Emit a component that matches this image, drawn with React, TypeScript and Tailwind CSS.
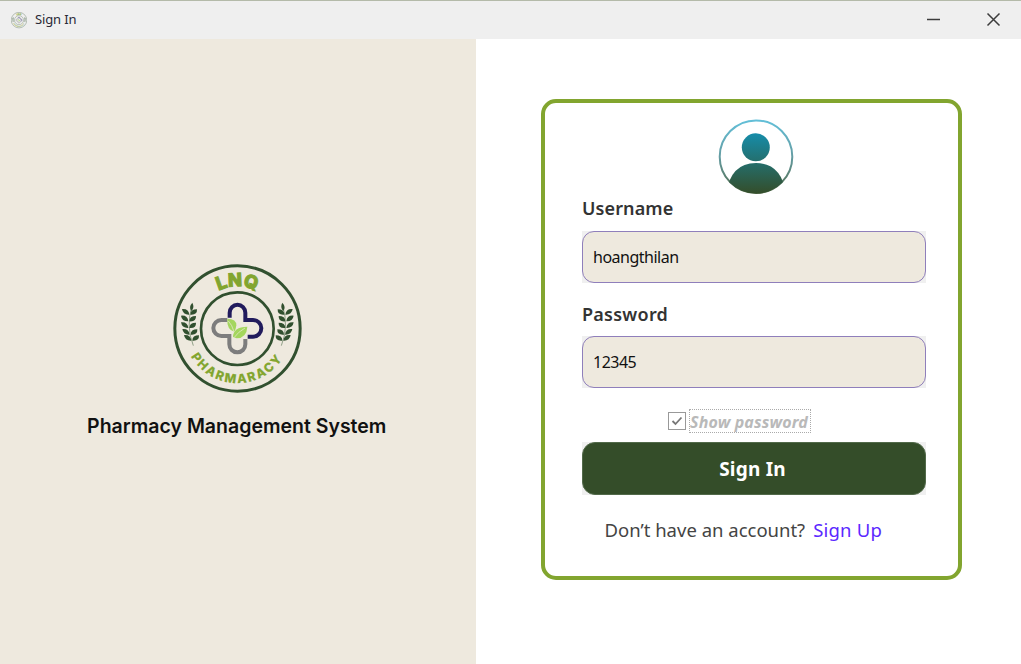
import React from "react";

function Leaves({ flip = false }: { flip?: boolean }) {
  const rows = [176, 196, 216, 236, 254];
  return (
    <g transform={flip ? "translate(434 0) scale(-1 1)" : undefined} fill="#31502f">
      <path d="M81 152Q62 215 85 272" fill="none" stroke="#5f7a5a" strokeWidth="2" />
      <path d="M82 143Q90 158 79 168Q70 156 82 143Z" />
      {rows.map((y, i) => {
        const x = [73, 70, 70, 74, 79][i];
        return (
          <g key={y} transform={`translate(${x} ${y})`}>
            <path d="M0 3Q-19 4 -22 -14Q-2 -16 0 3Z" />
            <path d="M3 3Q3 -13 23 -13Q24 5 3 3Z" />
          </g>
        );
      })}
    </g>
  );
}

function Logo({ className }: { className: string }) {
  return (
    <svg className={className} viewBox="0 0 435 435">
      <defs>
        <path id="top-arc" d="M92 219A125 125 0 0 1 342 219" />
        <path id="bottom-arc" d="M75 299A161 161 0 0 0 359 299" />
      </defs>
      <circle cx="217.500" cy="220.500" r="188" fill="none" stroke="#31502f" strokeWidth="9" />
      <circle cx="217" cy="221" r="109" fill="none" stroke="#31502f" strokeWidth="8" />
      <text fill="#82a52f" stroke="#82a52f" strokeWidth="3" fontFamily="Inter, sans-serif" fontWeight="800" fontSize="55" textAnchor="middle">
        <textPath href="#top-arc" startOffset="50%">LNQ</textPath>
      </text>
      <text fill="#82a52f" stroke="#82a52f" strokeWidth="0.500" fontFamily="Inter, sans-serif" fontWeight="800" fontSize="37" textLength="326">
        <textPath href="#bottom-arc" startOffset="6" textLength="326">PHARMARACY</textPath>
      </text>
      <Leaves />
      <Leaves flip />
      <g fill="none" strokeWidth="12">
        <path d="M194 188V173A23.500 23.500 0 0 1 241 173V195H264A24.500 24.500 0 0 1 264 245H248" stroke="#211b5c" />
        <path d="M187 195H169A24 24 0 0 0 169 243H193V268A24 24 0 0 0 241 268V252" stroke="#7d7d7d" />
      </g>
      <path d="M187 191Q215 192 214 211Q213 222 208 230Q185 224 187 191Z" fill="#a4d65e" />
      <path d="M247 215Q245 249 215 250L204 246Q204 216 247 215Z" fill="#a4d65e" />
      <path d="M190 198Q201 209 207 230M240 219Q219 231 208 247" fill="none" stroke="#eee9de" strokeWidth="2" />
    </svg>
  );
}

function Avatar() {
  return (
    <svg className="h-[76px] w-[76px]" viewBox="0 0 76 76">
      <defs>
        <linearGradient id="ring" x1="0" y1="0" x2="0" y2="1">
          <stop offset="0" stopColor="#62bfd8" />
          <stop offset=".5" stopColor="#649ca2" />
          <stop offset="1" stopColor="#526a4a" />
        </linearGradient>
        <linearGradient id="person" gradientUnits="userSpaceOnUse" x1="0" y1="14" x2="0" y2="75">
          <stop offset="0" stopColor="#168daa" />
          <stop offset="1" stopColor="#344d29" />
        </linearGradient>
        <clipPath id="disc"><circle cx="38" cy="37.500" r="37" /></clipPath>
      </defs>
      <circle cx="38" cy="37.700" r="36.300" fill="none" stroke="url(#ring)" strokeWidth="2" />
      <g fill="url(#person)" clipPath="url(#disc)">
        <circle cx="37.800" cy="28.300" r="14" />
        <path d="M8 76Q12 44 38 44Q64 44 68 76Z" />
      </g>
    </svg>
  );
}

function Field({ value }: { value: string }) {
  return (
    <div className="h-[52px] w-[344px] shrink-0 bg-[#f0f0f0]">
      <input
        readOnly
        value={value}
        className="block h-full w-full rounded-[12px] border-[1.5px] border-[#8f7fbb] bg-[#eee9de] pl-[10px] font-['Noto_Sans',sans-serif] text-[16px] tracking-[-0.5px] text-[#111] outline-none"
      />
    </div>
  );
}

export default function App() {
  return (
    <div className="flex h-[664px] w-[1021px] flex-col overflow-hidden bg-white font-['Noto_Sans',sans-serif]">
      <header className="flex h-[39px] shrink-0 items-center border-t border-[#b4baa9] bg-[#efefef] pl-[10px]">
        <Logo className="h-[18px] w-[18px] opacity-80" />
        <span className="ml-[7px] text-[13px] tracking-[-0.15px] text-[#292936]">Sign In</span>
        <svg className="ml-auto h-[38px] w-[121px]" viewBox="0 0 121 38" fill="none" stroke="#3c3c3c">
          <path d="M27 18.500H40" strokeWidth="1.500" />
          <path d="M87.500 12.500L99.500 24.500M99.500 12.500L87.500 24.500" strokeWidth="1.500" />
        </svg>
      </header>
      <main className="flex min-h-0 flex-1">
        <section className="flex w-[475.5px] shrink-0 flex-col items-center bg-[#eee9de] pt-[216px]">
          <Logo className="h-[145px] w-[145px]" />
          <h1 className="mt-[12px] mr-[2px] whitespace-nowrap font-['Inter',sans-serif] text-[19.5px] leading-[29px] font-semibold text-[#111]">
            Pharmacy Management System
          </h1>
        </section>
        <section className="flex-1 pt-[60px] pl-[65.5px]">
          <form className="flex h-[481px] w-[421px] flex-col rounded-[15px] border-[4px] border-[#82a52f] pt-[16px] pl-[37px]">
            <div className="flex w-[344px] justify-center pl-[4px]"><Avatar /></div>
            <label className="mt-[-1px] h-[37px] text-[18px] leading-[28px] font-semibold tracking-[0.1px] text-[#333]">Username</label>
            <Field value="hoangthilan" />
            <label className="mt-[17px] h-[36px] text-[18px] leading-[28px] font-semibold tracking-[0.25px] text-[#333]">Password</label>
            <Field value="12345" />
            <div className="mt-[21px] ml-[86px] flex h-[24px] items-center gap-[3px]">
              <span className="flex h-[18px] w-[18px] items-center justify-center border border-[#999]">
                <svg className="h-[12px] w-[12px]" viewBox="0 0 12 12" fill="none" stroke="#777" strokeWidth="1.800"><path d="M1.500 6L4.500 9L10.500 2.500" /></svg>
              </span>
              <span className="flex h-[24px] w-[122px] items-center border border-dotted border-[#aaa] pt-[1px] text-[16px] font-bold tracking-[0.15px] whitespace-nowrap text-[#b9b9b9] italic">Show password</span>
            </div>
            <div className="mt-[9px] h-[53px] w-[344px] shrink-0 bg-[#f0f0f0]">
              <button type="button" className="h-full w-full rounded-[13px] border border-[#526a4a] bg-[#344d29] pt-[2px] pr-[3px] text-[19px] font-bold tracking-[0.2px] text-white">Sign In</button>
            </div>
            <p className="mt-[20px] ml-[22.5px] flex gap-[8px] text-[18.5px] leading-[30px] whitespace-nowrap text-[#444]">
              <span>Don’t have an account?</span>
              <a className="tracking-[0.2px] text-[#5b28ff]">Sign Up</a>
            </p>
          </form>
        </section>
      </main>
    </div>
  );
}
